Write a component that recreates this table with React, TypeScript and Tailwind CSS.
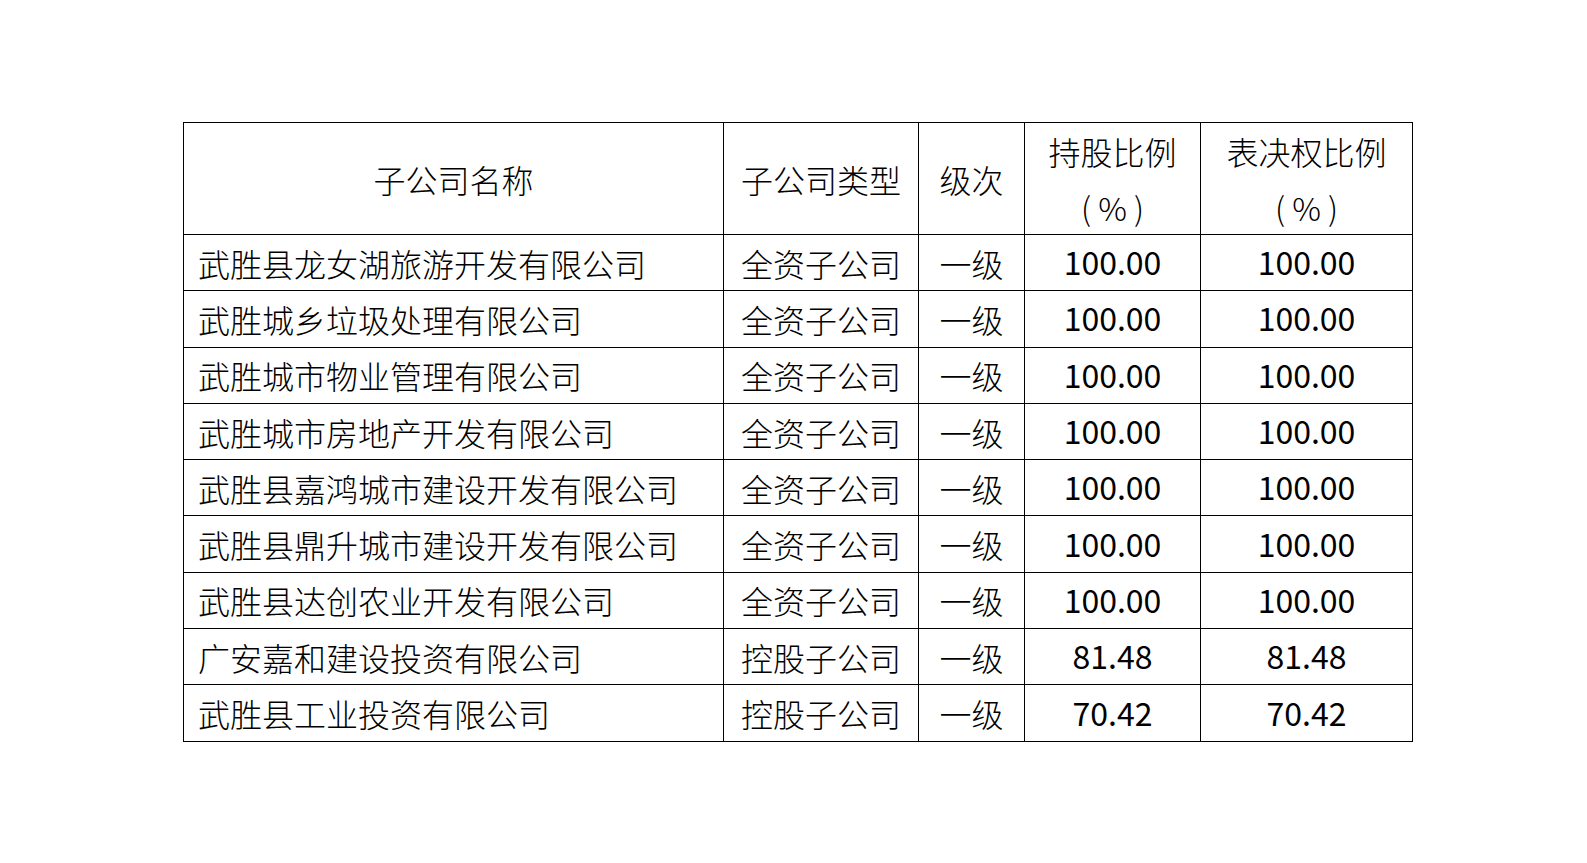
const rows = [
  ["武胜县龙女湖旅游开发有限公司", "全资子公司", "一级", "100.00", "100.00"],
  ["武胜城乡垃圾处理有限公司", "全资子公司", "一级", "100.00", "100.00"],
  ["武胜城市物业管理有限公司", "全资子公司", "一级", "100.00", "100.00"],
  ["武胜城市房地产开发有限公司", "全资子公司", "一级", "100.00", "100.00"],
  ["武胜县嘉鸿城市建设开发有限公司", "全资子公司", "一级", "100.00", "100.00"],
  ["武胜县鼎升城市建设开发有限公司", "全资子公司", "一级", "100.00", "100.00"],
  ["武胜县达创农业开发有限公司", "全资子公司", "一级", "100.00", "100.00"],
  ["广安嘉和建设投资有限公司", "控股子公司", "一级", "81.48", "81.48"],
  ["武胜县工业投资有限公司", "控股子公司", "一级", "70.42", "70.42"],
];

const cell = "border-r border-b border-black flex items-center justify-center";

export default function App() {
  return (
    <div
      className="w-full h-[863px] overflow-hidden bg-white pt-[122px] pl-[183px] text-black text-[32px] leading-[56px] font-light"
      style={{ fontFamily: '"Noto Sans CJK SC", "Noto Sans", sans-serif' }}
    >
      <div className="grid grid-cols-[540px_195px_106px_176px_212px] grid-rows-[112px_repeat(9,56.3px)] w-[1230px] border-l border-t border-black">
        <div className={cell}>子公司名称</div>
        <div className={cell}>子公司类型</div>
        <div className={cell}>级次</div>
        <div className={`${cell} flex-col`}>
          <span>持股比例</span>
          <span className="whitespace-pre">( % )</span>
        </div>
        <div className={`${cell} flex-col`}>
          <span>表决权比例</span>
          <span className="whitespace-pre">( % )</span>
        </div>
        {rows.map((r) => (
          <div key={r[0]} className="contents">
            <div className="border-r border-b border-black flex items-center pl-[14px]">{r[0]}</div>
            <div className={cell}>{r[1]}</div>
            <div className={cell}>{r[2]}</div>
            <div className={`${cell} font-normal pb-[3px]`}>{r[3]}</div>
            <div className={`${cell} font-normal pb-[3px]`}>{r[4]}</div>
          </div>
        ))}
      </div>
    </div>
  );
}
